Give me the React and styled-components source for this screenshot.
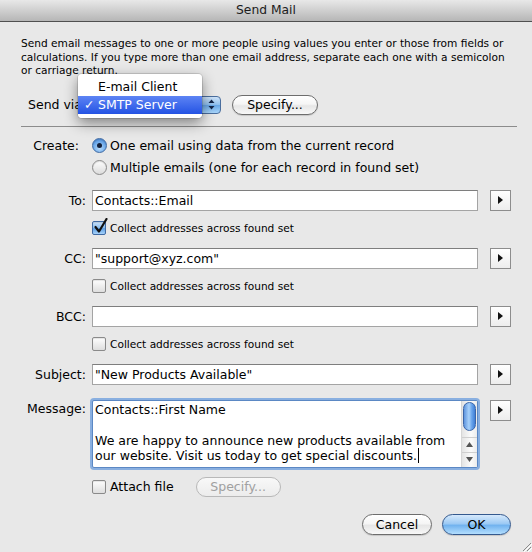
import React from "react";
import styled, { createGlobalStyle, css } from "styled-components";

const GlobalStyle = createGlobalStyle`
  html, body {
    margin: 0;
    padding: 0;
    background: #e8e8e8;
  }
  body {
    font-family: "DejaVu Sans", "Liberation Sans", sans-serif;
  }
`;

const Window = styled.div`
  position: relative;
  width: 532px;
  height: 552px;
  overflow: hidden;
  background: #e8e8e8;
  font-family: "DejaVu Sans", "Liberation Sans", sans-serif;
  font-size: 12.5px;
  color: #000;
`;

const TitleBar = styled.div`
  height: 21px;
  line-height: 21px;
  text-align: center;
  border-bottom: 1px solid #505050;
  background: linear-gradient(#e8e8e8, #b6b6b6);
  font-size: 12.3px;
  color: #1c1c1c;
`;

const Body = styled.div`
  padding: 0 15px 0 21px;
`;

const Intro = styled.p`
  margin: 15px 0 0;
  font-size: 10.6px;
  line-height: 13.5px;
  white-space: nowrap;
`;

const SendRow = styled.div`
  display: flex;
  align-items: center;
  height: 20px;
  margin-top: 17px;
  padding-left: 7px;
`;

const SendLabel = styled.span`
  width: 50px;
  white-space: nowrap;
`;

const Popup = styled.div`
  position: relative;
  display: flex;
  width: 143px;
  height: 18px;
  margin-right: 11px;
`;

const PopupFace = styled.div`
  flex: 1;
  border: 1px solid #8a8a8a;
  border-right: none;
  border-radius: 4px 0 0 4px;
  background: linear-gradient(#ffffff, #ececec);
`;

const Stepper = styled.div`
  width: 18px;
  display: flex;
  align-items: center;
  justify-content: center;
  border: 1px solid #4a6e9e;
  border-radius: 0 4px 4px 0;
  background: linear-gradient(#cfe4fa 0%, #8fc0ef 48%, #69a8e8 52%, #a9d6fb 100%);
`;

const Menu = styled.div`
  position: absolute;
  left: 0;
  top: -22px;
  width: 124px;
  padding: 4px 0;
  background: rgba(255, 255, 255, 0.97);
  border-radius: 4px;
  box-shadow: 0 5px 14px rgba(0, 0, 0, 0.45), 0 0 0 1px rgba(0, 0, 0, 0.12);
`;

const MenuItem = styled.div`
  position: relative;
  height: 18px;
  line-height: 18px;
  padding-left: 20px;
  white-space: nowrap;
  ${(p) =>
    p.$selected &&
    css`
      color: #fff;
      background: linear-gradient(#5d84f4, #2453e4);
    `}
`;

const Check = styled.span`
  position: absolute;
  left: 6px;
  top: 0;
`;

const AquaButton = styled.button`
  box-sizing: border-box;
  width: ${(p) => p.$w}px;
  height: ${(p) => p.$h || 21}px;
  padding: 0;
  border-radius: 11px;
  border: 1px solid #6d6d6d;
  background: linear-gradient(#ffffff 0%, #f5f5f5 45%, #e6e6e6 55%, #f8f8f8 100%);
  box-shadow: 0 1px 1px rgba(0, 0, 0, 0.15);
  font-family: inherit;
  font-size: 12.5px;
  color: #000;
  ${(p) =>
    p.$primary &&
    css`
      border-color: #34598e;
      background: linear-gradient(#d6e9fc 0%, #9dcaf4 45%, #72b3ef 55%, #b3defe 100%);
    `}
  ${(p) =>
    p.$off &&
    css`
      border-color: #b8b8b8;
      color: #a0a0a0;
      box-shadow: none;
      background: linear-gradient(#f8f8f8, #ececec);
    `}
`;

const Separator = styled.hr`
  margin: 11px 0 0;
  border: none;
  height: 1px;
  background: #8c8c8c;
`;

const FieldRow = styled.div`
  display: flex;
  align-items: ${(p) => (p.$top ? "flex-start" : "center")};
  margin-top: ${(p) => p.$mt || 0}px;
`;

const FieldLabel = styled.div`
  width: 65px;
  box-sizing: border-box;
  padding-right: ${(p) => p.$pr || 0}px;
  margin-right: 6px;
  text-align: right;
  white-space: nowrap;
  line-height: ${(p) => p.$lh || 21}px;
`;

const Field = styled.div`
  box-sizing: border-box;
  width: 386px;
  height: 21px;
  padding: 0 2px;
  line-height: 19px;
  background: #fff;
  border: 1px solid #a4a4a4;
  border-top-color: #7e7e7e;
  white-space: nowrap;
`;

const ArrowButton = styled.div`
  box-sizing: border-box;
  width: 21px;
  height: 21px;
  margin-left: 12px;
  display: flex;
  align-items: center;
  justify-content: center;
  border: 1px solid #8d8d8d;
  background: linear-gradient(#ffffff, #ededed);
`;

const RadioGroup = styled.div`
  display: flex;
  flex-direction: column;
  gap: 4px;
`;

const OptionRow = styled.div`
  display: flex;
  align-items: center;
  height: ${(p) => p.$h || 18}px;
  margin-top: ${(p) => p.$mt || 0}px;
  padding-left: ${(p) => p.$indent || 0}px;
  font-size: ${(p) => (p.$small ? "10.6px" : "12.5px")};
  white-space: nowrap;
`;

const Radio = styled.span`
  box-sizing: border-box;
  width: 15px;
  height: 15px;
  margin-right: 3px;
  border-radius: 50%;
  display: flex;
  align-items: center;
  justify-content: center;
  border: 1px solid #8a8a8a;
  background: linear-gradient(#fdfdfd, #dcdcdc);
  box-shadow: inset 0 1px 1px rgba(0, 0, 0, 0.12);
  ${(p) =>
    p.$on &&
    css`
      border-color: #3f6aa3;
      background: radial-gradient(circle at 50% 70%, #b9dcfb 0%, #6eaaea 55%, #3f7fd4 100%);
      &::after {
        content: "";
        width: 5px;
        height: 5px;
        border-radius: 50%;
        background: #14203a;
      }
    `}
`;

const Box = styled.span`
  position: relative;
  box-sizing: border-box;
  width: 14px;
  height: 14px;
  margin-right: 4px;
  border-radius: 2px;
  border: 1px solid #8a8a8a;
  background: linear-gradient(#fefefe, #dedede);
  box-shadow: inset 0 1px 1px rgba(0, 0, 0, 0.1);
  ${(p) =>
    p.$on &&
    css`
      border-color: #3f6aa3;
      background: linear-gradient(#cde3fa 0%, #86bcef 50%, #5f9fe3 55%, #a8d3fa 100%);
    `}
`;

const CheckMark = styled.svg`
  position: absolute;
  left: 1px;
  top: -4px;
`;

const Message = styled.div`
  box-sizing: border-box;
  width: 386px;
  height: 68px;
  display: flex;
  background: #fff;
  border: 1px solid #5b88c4;
  box-shadow: 0 0 0 2px rgba(120, 165, 222, 0.85);
  border-radius: 2px;
`;

const MessageText = styled.div`
  flex: 1;
  padding: 1px 2px 0;
  line-height: 15.5px;
  white-space: nowrap;
`;

const Caret = styled.span`
  display: inline-block;
  width: 1px;
  height: 15px;
  margin-left: 1px;
  vertical-align: -3px;
  background: #000;
`;

const ScrollBar = styled.div`
  width: 15px;
  display: flex;
  flex-direction: column;
  border-left: 1px solid #d6d6d6;
  background: linear-gradient(90deg, #e4e4e4, #fbfbfb 60%, #ececec);
`;

const Thumb = styled.div`
  height: 27px;
  margin: 1px 1px 0;
  border-radius: 7px;
  border: 1px solid #3c66a8;
  background: linear-gradient(90deg, #5f95de 0%, #a9d2fb 45%, #6aa5ec 70%, #3f7ed6 100%);
`;

const ScrollSpace = styled.div`
  flex: 1;
`;

const ScrollArrow = styled.div`
  height: 14px;
  display: flex;
  align-items: center;
  justify-content: center;
  border-top: 1px solid #cfcfcf;
`;

const AttachRow = styled.div`
  display: flex;
  align-items: center;
  height: 20px;
  margin-top: 9px;
  padding-left: 71px;
`;

const AttachLabel = styled.span`
  margin-right: 22px;
`;

const Footer = styled.div`
  display: flex;
  justify-content: flex-end;
  gap: 10px;
  margin-top: 17px;
  padding-right: 21px;
`;

const Grip = styled.svg`
  position: absolute;
  right: 0;
  bottom: 0;
`;

const Tri = () => (
  <svg width="5" height="8" viewBox="0 0 5 8">
    <path d="M0 0 L5 4 L0 8 Z" fill="#111" />
  </svg>
);

const fields = [
  { label: "To:", value: "Contacts::Email", collect: true, mt: 13 },
  { label: "CC:", value: '"support@xyz.com"', collect: false, mt: 12 },
  { label: "BCC:", value: "", collect: false, mt: 12 },
];

export default function App() {
  return (
    <>
      <GlobalStyle />
      <Window>
        <TitleBar>Send Mail</TitleBar>
        <Body>
          <Intro>
            Send email messages to one or more people using values you enter or those from fields or
            <br />
            calculations. If you type more than one email address, separate each one with a semicolon
            <br />
            or carriage return.
          </Intro>

          <SendRow>
            <SendLabel>Send via</SendLabel>
            <Popup>
              <PopupFace />
              <Stepper>
                <svg width="7" height="11" viewBox="0 0 7 11">
                  <path d="M3.5 0.5 L6.5 4 L0.5 4 Z M3.5 10.5 L6.5 7 L0.5 7 Z" fill="#13264a" />
                </svg>
              </Stepper>
              <Menu>
                <MenuItem>E-mail Client</MenuItem>
                <MenuItem $selected>
                  <Check>✓</Check>
                  SMTP Server
                </MenuItem>
              </Menu>
            </Popup>
            <AquaButton $w={86} $h={20}>Specify...</AquaButton>
          </SendRow>

          <Separator />

          <FieldRow $top $mt={10}>
            <FieldLabel $pr={7} $lh={18}>Create:</FieldLabel>
            <RadioGroup>
              <OptionRow>
                <Radio $on />
                One email using data from the current record
              </OptionRow>
              <OptionRow>
                <Radio />
                Multiple emails (one for each record in found set)
              </OptionRow>
            </RadioGroup>
          </FieldRow>

          {fields.map((f) => (
            <React.Fragment key={f.label}>
              <FieldRow $mt={f.mt}>
                <FieldLabel>{f.label}</FieldLabel>
                <Field>{f.value}</Field>
                <ArrowButton>
                  <Tri />
                </ArrowButton>
              </FieldRow>
              <OptionRow $small $h={16} $mt={9} $indent={71}>
                <Box $on={f.collect}>
                  {f.collect && (
                    <CheckMark width="14" height="16" viewBox="0 0 14 16">
                      <path
                        d="M1.5 9 L5 13.5 L12.5 1"
                        fill="none"
                        stroke="#111"
                        strokeWidth="2.2"
                        strokeLinecap="round"
                        strokeLinejoin="round"
                      />
                    </CheckMark>
                  )}
                </Box>
                Collect addresses across found set
              </OptionRow>
            </React.Fragment>
          ))}

          <FieldRow $mt={12}>
            <FieldLabel>Subject:</FieldLabel>
            <Field>"New Products Available"</Field>
            <ArrowButton>
              <Tri />
            </ArrowButton>
          </FieldRow>

          <FieldRow $top $mt={15}>
            <FieldLabel $lh={18}>Message:</FieldLabel>
            <Message>
              <MessageText>
                Contacts::First Name
                <br />
                <br />
                We are happy to announce new products available from
                <br />
                our website. Visit us today to get special discounts.
                <Caret />
              </MessageText>
              <ScrollBar>
                <Thumb />
                <ScrollSpace />
                <ScrollArrow>
                  <svg width="7" height="5" viewBox="0 0 7 5">
                    <path d="M3.5 0 L7 5 L0 5 Z" fill="#555" />
                  </svg>
                </ScrollArrow>
                <ScrollArrow>
                  <svg width="7" height="5" viewBox="0 0 7 5">
                    <path d="M0 0 L7 0 L3.5 5 Z" fill="#555" />
                  </svg>
                </ScrollArrow>
              </ScrollBar>
            </Message>
            <ArrowButton>
              <Tri />
            </ArrowButton>
          </FieldRow>

          <AttachRow>
            <Box />
            <AttachLabel>Attach file</AttachLabel>
            <AquaButton $w={85} $h={20} $off>
              Specify...
            </AquaButton>
          </AttachRow>
        </Body>

        <Footer>
          <AquaButton $w={70}>Cancel</AquaButton>
          <AquaButton $w={69} $primary>
            OK
          </AquaButton>
        </Footer>

        <Grip width="12" height="12" viewBox="0 0 12 12">
          <path d="M11 3 L3 11 M11 7 L7 11" stroke="#8a8a8a" strokeWidth="1" />
          <path d="M12 4 L4 12 M12 8 L8 12" stroke="#fff" strokeWidth="1" />
        </Grip>
      </Window>
    </>
  );
}
